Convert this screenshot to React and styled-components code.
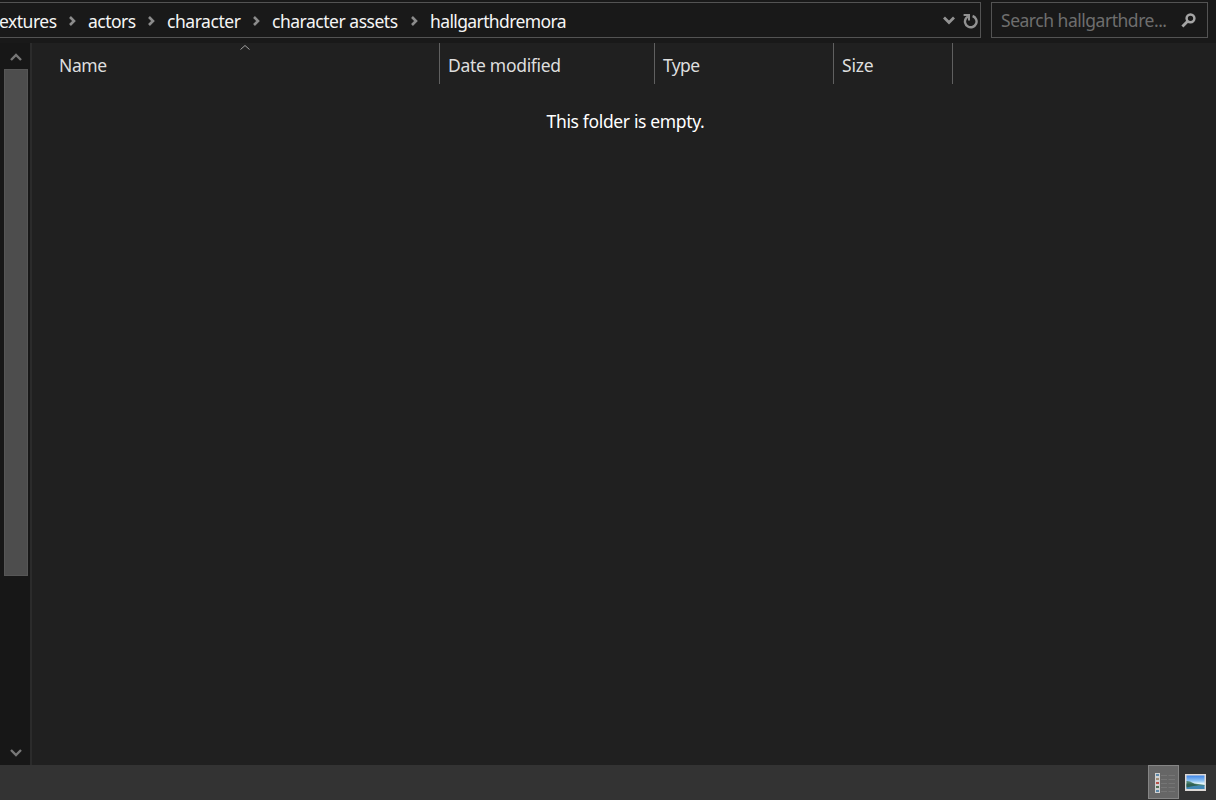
import styled, { createGlobalStyle } from "styled-components";

const GlobalStyle = createGlobalStyle`
  * {
    box-sizing: border-box;
  }
  body {
    margin: 0;
    overflow: hidden;
    background-color: #202020;
    font-family: "Noto Sans", "Open Sans", sans-serif;
    font-size: 17.5px;
  }
  svg {
    display: block;
    flex-shrink: 0;
  }
`;

const Explorer = styled.div`
  width: 1216px;
  height: 800px;
  display: flex;
  flex-direction: column;
`;

const Toolbar = styled.div`
  height: 43px;
  padding: 2px 8px 5px 0;
  display: flex;
  gap: 10px;
  background-color: #191919;
`;

const AddressBar = styled.div`
  width: 981px;
  border: 1px solid #535353;
  border-left: none;
  display: flex;
  align-items: center;
`;

const Crumb = styled.div`
  width: ${(props) => props.$width}px;
  display: flex;
  align-items: center;
  justify-content: space-between;
  padding-top: 1px;
  padding-right: ${(props) => (props.$last ? 0 : 10)}px;
  color: #f5f5f5;
  white-space: nowrap;
  line-height: 24px;
`;

const CrumbText = styled.span`
  margin-left: ${(props) => (props.$clipped ? -1 : 0)}px;
  letter-spacing: ${(props) => props.$spacing || 0}px;
`;

const AddressButtons = styled.div`
  margin-left: auto;
  padding-top: 1px;
  padding-right: 1px;
  display: flex;
  align-items: center;
  gap: 8px;
`;

const SearchBox = styled.div`
  width: 217px;
  border: 1px solid #535353;
  padding: 0 10px 0 9px;
  display: flex;
  align-items: center;
  justify-content: space-between;
  color: #6e6e6e;
  letter-spacing: -0.48px;
  white-space: nowrap;
`;

const Body = styled.div`
  height: 722px;
  display: flex;
`;

const ScrollBar = styled.div`
  width: 30px;
  padding: 10px 2px 8px 3px;
  display: flex;
  flex-direction: column;
  align-items: center;
  background-color: #171717;
`;

const ScrollThumb = styled.div`
  width: 24px;
  height: 507px;
  margin: 7px 0 auto;
  border: 1px solid #565656;
  background-color: #4d4d4d;
`;

const Splitter = styled.div`
  width: 2px;
  background-color: #2b2b2b;
`;

const FileList = styled.div`
  flex: 1;
`;

const HeaderRow = styled.div`
  height: 41px;
  display: flex;
`;

const HeaderCell = styled.div`
  position: relative;
  width: ${(props) => props.$width}px;
  padding-left: ${(props) => props.$indent || 8}px;
  border-right: 1px solid #606060;
  color: #dedede;
  line-height: 45px;
  letter-spacing: ${(props) => props.$spacing || 0}px;
`;

const SortMark = styled.div`
  position: absolute;
  top: 1px;
  left: 207px;
`;

const EmptyMessage = styled.p`
  margin: 25px 0 0;
  padding-left: 3px;
  color: #fff;
  line-height: 24px;
  letter-spacing: -0.35px;
  text-align: center;
`;

const StatusBar = styled.div`
  height: 35px;
  padding-right: 5px;
  display: flex;
  justify-content: flex-end;
  background-color: #333;
`;

const ViewButton = styled.div`
  width: ${(props) => (props.$active ? 31 : 32)}px;
  height: 34px;
  padding: ${(props) => (props.$active ? "2px 0 0 3px" : "0 0 0 1px")};
  display: flex;
  align-items: center;
  justify-content: center;
  border: 1px solid ${(props) => (props.$active ? "#858585" : "transparent")};
  background-color: ${(props) => (props.$active ? "#666" : "transparent")};
`;

const crumbs = [
  { name: "extures", width: 88, spacing: -0.5, clipped: true },
  { name: "actors", width: 79, spacing: -0.5 },
  { name: "character", width: 105, spacing: -0.45 },
  { name: "character assets", width: 158, spacing: -0.48 },
  { name: "hallgarthdremora", width: 140, spacing: -0.62, last: true },
];

const columns = [
  { name: "Name", width: 408, indent: 27, spacing: -0.4, sorted: true },
  { name: "Date modified", width: 215, spacing: -0.3 },
  { name: "Type", width: 179, spacing: -0.6 },
  { name: "Size", width: 119, spacing: -0.2 },
];

const CrumbArrow = () => (
  <svg width="10" height="12" viewBox="0 0 10 12" fill="none">
    <path d="M2 2L6 6L2 10" stroke="#8c8c8c" strokeWidth="2.6" />
  </svg>
);

const ScrollArrow = ({ down }) => (
  <svg width="12" height="9" viewBox="0 0 12 9" fill="none">
    <path
      d={down ? "M1 2L6 7L11 2" : "M1 7L6 2L11 7"}
      stroke="#777"
      strokeWidth="2.4"
    />
  </svg>
);

const DropIcon = () => (
  <svg width="12" height="9" viewBox="0 0 12 9" fill="none">
    <path d="M1 1.5L6 6.5L11 1.5" stroke="#929292" strokeWidth="2.8" />
  </svg>
);

const RefreshIcon = () => (
  <svg width="16" height="16" viewBox="0 0 16 16" fill="none">
    <path
      d="M9.6 3A5.8 5.8 0 1 1 3 5.2L5 3.4"
      stroke="#929292"
      strokeWidth="2.4"
    />
    <path d="M0.6 2H6V7.4" stroke="#929292" strokeWidth="2" />
  </svg>
);

const SearchIcon = () => (
  <svg width="16" height="16" viewBox="0 0 16 16" fill="none">
    <circle cx="9.5" cy="6.3" r="3.9" stroke="#a5a5a5" strokeWidth="2.5" />
    <path d="M6.6 9.2L1.4 14.4" stroke="#a5a5a5" strokeWidth="2.8" />
  </svg>
);

const DetailsIcon = () => (
  <svg width="21" height="20" viewBox="0 0 21 20">
    <rect x="0" y="0" width="5" height="20" fill="#d0d0d0" />
    {["#5d88a8", "#a08c74", "#b65248", "#4f6f52", "#5d88a8"].map((color, i) => (
      <g key={i}>
        <rect x="1" y={1 + i * 4} width="3" height="2" fill={color} />
        <path
          d={`M6 ${2.5 + i * 4}H12M13.5 ${2.5 + i * 4}H20`}
          stroke="#757575"
        />
      </g>
    ))}
  </svg>
);

const PictureIcon = () => (
  <svg width="21" height="17" viewBox="0 0 21 17">
    <defs>
      <linearGradient id="sky" x1="0" y1="0" x2="0" y2="1">
        <stop offset="0" stopColor="#3f86e8" />
        <stop offset="0.4" stopColor="#8fc4f5" />
        <stop offset="0.6" stopColor="#e4f5fb" />
        <stop offset="1" stopColor="#8fc0dc" />
      </linearGradient>
    </defs>
    <rect width="21" height="17" fill="#ddd9d6" />
    <rect x="1.5" y="1.5" width="18" height="13.5" fill="url(#sky)" />
    <path d="M1.5 7L5 7.5L9 9.5L13 10L19.5 11V12H1.5Z" fill="#4d806c" />
    <path d="M1.5 11.5H19.5V15H1.5Z" fill="#3f86b4" />
    <path d="M1.5 9.5H8L13 11.2L6 12.5L1.5 13.5Z" fill="#2f6152" />
  </svg>
);

const App = () => {
  return (
    <>
      <GlobalStyle />
      <Explorer>
        <Toolbar>
          <AddressBar>
            {crumbs.map(({ name, width, spacing, clipped, last }) => (
              <Crumb key={name} $width={width} $last={last}>
                <CrumbText $spacing={spacing} $clipped={clipped}>
                  {name}
                </CrumbText>
                {!last && <CrumbArrow />}
              </Crumb>
            ))}
            <AddressButtons>
              <DropIcon />
              <RefreshIcon />
            </AddressButtons>
          </AddressBar>
          <SearchBox>
            <span>Search hallgarthdre...</span>
            <SearchIcon />
          </SearchBox>
        </Toolbar>
        <Body>
          <ScrollBar>
            <ScrollArrow />
            <ScrollThumb />
            <ScrollArrow down />
          </ScrollBar>
          <Splitter />
          <FileList>
            <HeaderRow>
              {columns.map(({ name, width, indent, spacing, sorted }) => (
                <HeaderCell
                  key={name}
                  $width={width}
                  $indent={indent}
                  $spacing={spacing}
                >
                  {name}
                  {sorted && (
                    <SortMark>
                      <svg width="12" height="7" viewBox="0 0 12 7" fill="none">
                        <path d="M1.5 5.5L6 1.5L10.5 5.5" stroke="#a0a0a0" />
                      </svg>
                    </SortMark>
                  )}
                </HeaderCell>
              ))}
            </HeaderRow>
            <EmptyMessage>This folder is empty.</EmptyMessage>
          </FileList>
        </Body>
        <StatusBar>
          <ViewButton $active>
            <DetailsIcon />
          </ViewButton>
          <ViewButton>
            <PictureIcon />
          </ViewButton>
        </StatusBar>
      </Explorer>
    </>
  );
};
export default App;
